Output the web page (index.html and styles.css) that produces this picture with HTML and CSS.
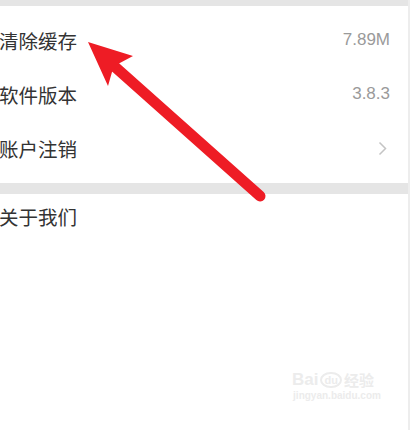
FILE: index.html
```html
<!DOCTYPE html>
<html>
  <head>
    <link rel="stylesheet" href="styles.css">
  </head>
  <body>
    <div class="page">
      <div class="band band-top"></div>

      <div class="group group-first">
        <div class="row">
          <div class="row-title">清除缓存</div>
          <div class="row-value">7.89M</div>
        </div>
        <div class="row">
          <div class="row-title">软件版本</div>
          <div class="row-value">3.8.3</div>
        </div>
        <div class="row">
          <div class="row-title">账户注销</div>
          <svg class="row-chevron" width="9" height="15" viewBox="0 0 9 15">
            <path d="M1.5 1.5 L7.5 7.5 L1.5 13.5" fill="none" stroke="#c4c4c4" stroke-width="1.5" />
          </svg>
        </div>
      </div>

      <div class="band band-mid"></div>

      <div class="group">
        <div class="row row-last">
          <div class="row-title">关于我们</div>
        </div>
      </div>

      <div class="watermark">
        <div class="watermark-logo">
          <span>Bai</span>
          <span class="watermark-du">du</span>
          <span class="watermark-cn">经验</span>
        </div>
        <div class="watermark-url">jingyan.baidu.com</div>
      </div>
    </div>

    <svg class="arrow" width="410" height="430" viewBox="0 0 410 430">
      <line x1="260" y1="196" x2="114" y2="66" stroke="#ee1c25" stroke-width="11" stroke-linecap="round" />
      <polygon points="88,42 133,56 118,64 112,72 108,86" fill="#ee1c25" />
    </svg>
  </body>
</html>
```

FILE: styles.css
```css
html,
body {
  margin: 0;
  height: 100%;
  background: #ffffff;
}

.page {
  width: 408px;
  height: 430px;
  border-right: 2px solid #ededed;
  background: #ffffff;
}

.band {
  background: #e5e5e5;
}

.band-top {
  height: 6px;
}

.band-mid {
  height: 11px;
}

.group-first {
  padding-top: 7px;
  padding-bottom: 8px;
}

.row {
  height: 54px;
  display: flex;
  align-items: center;
  justify-content: space-between;
  padding-right: 18px;
}

.row-last {
  height: 44px;
}

.row-title {
  font-family: "Noto Sans CJK SC", sans-serif;
  font-size: 19.5px;
  color: #333333;
  margin-left: -1px;
}

.row-value {
  font-family: "Liberation Sans", Arial, sans-serif;
  font-size: 17px;
  color: #9a9a9a;
}

.row-chevron {
  margin-right: 3px;
}

/* watermark */

.watermark {
  margin: 131px 0 0 292px;
  width: 90px;
  color: #ececec;
  text-align: center;
}

.watermark-logo {
  font-family: "Liberation Sans", Arial, sans-serif;
  font-weight: bold;
  font-size: 17px;
  display: flex;
  align-items: center;
  gap: 2px;
}

.watermark-du {
  font-size: 11px;
  border: 2px solid #ececec;
  border-radius: 50%;
  padding: 0 2px;
}

.watermark-cn {
  font-family: "Noto Sans CJK SC", sans-serif;
  font-size: 15px;
}

.watermark-url {
  font-family: "Liberation Sans", Arial, sans-serif;
  font-size: 10px;
  font-weight: bold;
}

.arrow {
  position: absolute;
  left: 0;
  top: 0;
}
```
